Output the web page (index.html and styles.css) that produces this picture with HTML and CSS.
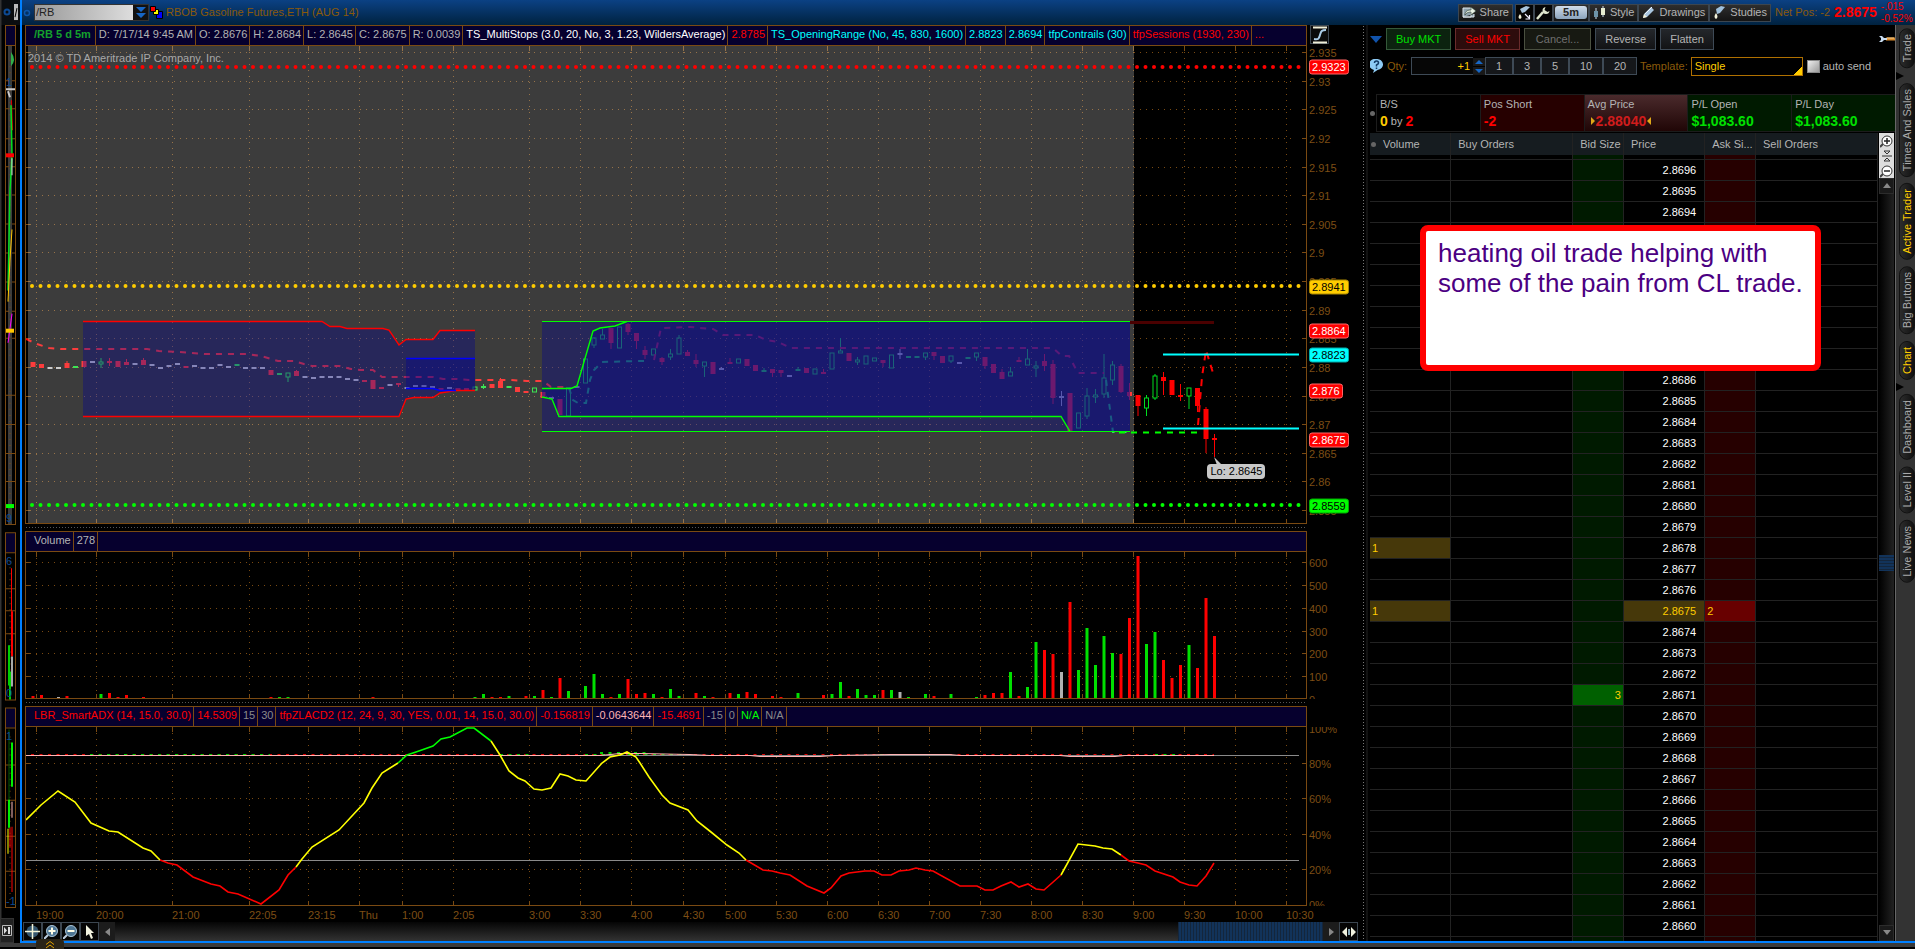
FILE: index.html
```html
<!DOCTYPE html>
<html lang="en">
<head>
    <meta charset="UTF-8">
    <meta name="viewport" content="width=device-width, initial-scale=1.0">
    <title>RBOB Gasoline Futures,ETH (AUG 14)</title>
    <link rel="stylesheet" href="styles.css">
</head>
<body>
    <div class="app">
        <aside class="behind">
            <svg class="behind-chart" viewBox="0 0 20 941" preserveAspectRatio="none" aria-hidden="true">
                <rect x="0" y="0" width="20" height="25" fill="#0a0d10"/>
                <path d="M0.5 0V941" stroke="#333" stroke-width="2"/>
                <circle cx="7" cy="12" r="2.5" fill="none" stroke="#0d4a94" stroke-width="2"/>
                <path d="M14 4h4v16h-4z" fill="#bbb"/>
                <path d="M15 17l2-9" stroke="#000"/>
                <path d="M5 26h11v19H5zM5 532h11v19H5zM5 707h11v19H5z" fill="#06002e"/>
                <path d="M8 46h4v477H8z" fill="#3c3c3c"/>
                <path d="M11 52q6 8 0 14z" fill="#2fae4a"/>
                <path d="M10 60v450M10 560v135M10 735v165" stroke="#7a4a12" stroke-dasharray="1 5"/>
                <path d="M5.500 25V523M15.500 25V523M5 25.500h11M5 45.500h11M5 523.500h11M5.500 531v167M15.500 531v167M5 531.500h11M5 551.500h11M5 698.500h11M5.500 706v199M15.500 706v199M5 706.500h11M5 726.500h11M5 905.500h11" stroke="#7a4a12"/>
                <path d="M5 80.500h4M12 80.500h4M5 108.500h4M12 108.500h4M5 138.500h4M12 138.500h4M5 166.500h4M12 166.500h4M5 194.500h4M12 194.500h4M5 223.500h4M12 223.500h4M5 252.500h4M12 252.500h4M5 281.500h4M12 281.500h4M5 310.500h4M12 310.500h4M5 337.500h4M12 337.500h4M5 394.500h10M5 423.500h10M5 452.500h10M5 480.500h10M5 587.500h10M5 609.500h10M5 632.500h10M5 763.500h10M5 798.500h10M5 834.500h10M5 869.500h10" stroke="#7a4a12"/>
                <path d="M6 89h9M8 91l2 6" stroke="#ccc" stroke-width="2"/>
                <path d="M11.500 100l1 30" stroke="#e00000" stroke-width="1"/>
                <path d="M11 105l1 50-2 35-2 100" stroke="#00e020" stroke-width="1.500" fill="none"/>
                <path d="M12 158v17" stroke="#ddd"/>
                <path d="M12 229l-2 30-2 42" stroke="#ffc800" fill="none"/>
                <path d="M12 313l-2 15-2 14" stroke="#f0f" fill="none"/>
                <path d="M6 153h8v4H6z" fill="#f00"/>
                <path d="M6 328h8v4H6z" fill="#ffc800"/>
                <path d="M6 503h8v4H6z" fill="#0f0"/>
                <path d="M11.500 567v43" stroke="#f00"/>
                <path d="M12 610v45" stroke="#f00" stroke-width="2"/>
                <path d="M9 644v40M10 670v28" stroke="#00d000" stroke-width="2"/>
                <path d="M12 655v30" stroke="#aaa" stroke-width="2"/>
                <path d="M9 728v100" stroke="#005a00"/>
                <path d="M12 741v44M9 798v28" stroke="#00f000" stroke-width="2"/>
                <path d="M12 800v16" stroke="#fbb"/>
                <path d="M12 825v65M10 826v20" stroke="#f00"/>
                <path d="M8 827v25" stroke="#ff0"/>
                <g font-family="Liberation Sans, sans-serif" font-size="11" fill="#0b4a94">
                    <text x="6" y="86">1</text><text x="6" y="521">9</text><text x="6" y="564">6</text>
                    <text x="6" y="696">0</text><text x="6" y="738">1</text><text x="6" y="903">-1</text>
                </g>
            </svg>
            <button class="dock-button" aria-label="Show panel">
                <svg width="10" height="11" viewBox="0 0 10 11"><path d="M0.500 .5h9v10h-9z" fill="none" stroke="#bbb"/><path d="M2 2l3 3.500L2 9zM6 2h2v7H6z" fill="#ddd"/></svg>
            </button>
        </aside>

        <main class="window">
            <header class="titlebar">
                <svg class="link-dot" width="8" height="8" viewBox="0 0 8 8"><circle cx="4" cy="4" r="2.500" fill="none" stroke="#0d57ac" stroke-width="1.500"/></svg>
                <div class="symbol-box">
                    <input type="text" class="symbol" value="/RB" aria-label="Symbol">
                    <button class="symbol-drop" aria-label="Recent symbols">
                        <svg width="10" height="12" viewBox="0 0 10 12"><path d="M0 0h10L5 5zM0 6h10l-5 5z" fill="#1766c4"/></svg>
                    </button>
                </div>
                <svg class="squares" width="14" height="13" viewBox="0 0 14 13"><path d="M6.500 5.500h6v7h-6z" fill="#00f" stroke="#000"/><path d="M3.500 3.500h5v5h-5z" fill="#ff0" stroke="#000"/><path d="M.5 .5h5v5h-5z" fill="#f00" stroke="#000"/></svg>
                <h1>RBOB Gasoline Futures,ETH (AUG 14)</h1>
                <div class="tools">
                    <button class="tool share"><svg width="14" height="13" viewBox="0 0 14 13"><path d="M1 2h8v9H1zM1 11h11V8" fill="#8fa2ad" stroke="#dfe8ee"/><path d="M3 9c0-4 3-5 6-5V1l5 4-5 4V6C6 6 4 7 3 9z" fill="#e9f3e6" stroke="#25362c" stroke-width=".6"/></svg>Share</button>
                    <button class="tool icon" aria-label="Chart drawing"><svg width="14" height="14" viewBox="0 0 14 14"><path d="M3 3l6-3 4 1-5 5-3 1z" fill="#a7c4dd"/><path d="M3 8q3 4 0 5-3-1 0-5z" fill="#f2f2da"/><path d="M8 8l4 4M12.500 9v4H8.500" stroke="#eef" stroke-width="1.200" fill="none"/></svg></button>
                    <button class="tool icon" aria-label="Settings"><svg width="14" height="14" viewBox="0 0 14 14"><path d="M1 13l6-7" stroke="#dfe6ce" stroke-width="2.500"/><path d="M9.500 1a3.500 3.500 0 1 0 4 4l-2 1-3-2z" fill="#dfe6ce"/></svg></button>
                    <button class="tool interval"><b>5m</b></button>
                    <button class="tool"><svg width="13" height="13" viewBox="0 0 13 13"><path d="M3 2v11M10 0v11" stroke="#cde"/><path d="M1 5h4v6H1z" fill="#6d93a8"/><path d="M8 2h4v7H8z" fill="#e6ecd0"/></svg>Style</button>
                    <button class="tool"><svg width="13" height="13" viewBox="0 0 13 13"><path d="M1 12l1-4 7-7 3 3-7 7z" fill="#a9c6e0"/><path d="M1 12l1-4 3 3z" fill="#f4efd4"/><path d="M3 8l7-7" stroke="#eef6ff"/></svg>Drawings</button>
                    <button class="tool"><svg width="13" height="13" viewBox="0 0 13 13"><path d="M3 3l5-3 4 1-5 6-3 1z" fill="#9fc0dc"/><path d="M3 7q3 4 0 6-3-2 0-6z" fill="#f2f2da"/></svg>Studies</button>
                </div>
                <div class="position">
                    <span>Net Pos: -2</span>
                    <b>2.8675</b>
                    <span class="change">-.015<br>-0.52%</span>
                </div>
            </header>

            <div class="workspace">
                <section class="charts">
                    <div class="pane pane-price">
                        <div class="pane-main">
                            <div class="studies">
                                <span class="symbol-cell">/RB 5 d 5m</span>
                                <span>D: 7/17/14 9:45 AM</span>
                                <span>O: 2.8676</span>
                                <span>H: 2.8684</span>
                                <span>L: 2.8645</span>
                                <span>C: 2.8675</span>
                                <span>R: 0.0039</span>
                                <span class="white">TS_MultiStops (3.0, 20, No, 3, 1.23, WildersAverage)</span>
                                <span class="red">2.8785</span>
                                <span class="cyan">TS_OpeningRange (No, 45, 830, 1600)</span>
                                <span class="cyan">2.8823</span>
                                <span class="cyan">2.8694</span>
                                <span class="cyan">tfpContrails (30)</span>
                                <span class="red">tfpSessions (1930, 230)</span>
                                <span class="red last">...</span>
                            </div>
                            <div class="plot">
                                <svg id="pricePlot" viewBox="26 46 1280 477" preserveAspectRatio="none"></svg>
                                <p class="copyright">2014 © TD Ameritrade IP Company, Inc.</p>
                                <span class="low-tip">Lo: 2.8645</span>
                            </div>
                        </div>
                        <div class="axis-col">
                            <button class="axis-button" aria-label="Chart style">
                                <svg width="16" height="18" viewBox="0 0 16 18"><path d="M1 1.500h14M1 16.500h14" stroke="#efeed8" stroke-width="2"/><path d="M2 13c5 1 5-1 6-4s1-5 6-5" fill="none" stroke="#a9cbe6" stroke-width="2"/></svg>
                            </button>
                            <div class="axis" id="priceAxis"></div>
                        </div>
                    </div>
                    <div class="grip"></div>
                    <div class="pane pane-volume">
                        <div class="pane-main">
                            <div class="studies">
                                <span class="lead">Volume</span>
                                <span>278</span>
                            </div>
                            <div class="plot">
                                <svg id="volumePlot" viewBox="26 552 1280 146" preserveAspectRatio="none"></svg>
                            </div>
                        </div>
                        <div class="axis-col">
                            <div class="axis-head"></div>
                            <div class="axis" id="volumeAxis"></div>
                        </div>
                    </div>
                    <div class="grip"></div>
                    <div class="pane pane-adx">
                        <div class="pane-main">
                            <div class="studies">
                                <span class="lead red">LBR_SmartADX (14, 15.0, 30.0)</span>
                                <span class="red">14.5309</span>
                                <span class="gray">15</span>
                                <span class="gray">30</span>
                                <span class="red">tfpZLACD2 (12, 24, 9, 30, YES, 0.01, 14, 15.0, 30.0)</span>
                                <span class="red">-0.156819</span>
                                <span class="pink">-0.0643644</span>
                                <span class="red">-15.4691</span>
                                <span class="gray">-15</span>
                                <span class="gray">0</span>
                                <span class="green">N/A</span>
                                <span class="gray">N/A</span>
                            </div>
                            <div class="plot">
                                <svg id="adxPlot" viewBox="26 727 1280 178" preserveAspectRatio="none"></svg>
                            </div>
                        </div>
                        <div class="axis-col">
                            <div class="axis-head"></div>
                            <div class="axis" id="adxAxis"></div>
                        </div>
                    </div>
                    <div class="time-axis"><div id="timeAxis"></div></div>
                    <div class="chart-tools">
                        <button class="tool icon" aria-label="Crosshair"><svg width="15" height="15" viewBox="0 0 15 15"><circle cx="7.500" cy="7.500" r="6" fill="#35566e"/><path d="M7.500 0v15M0 7.500h15" stroke="#f2f3d8" stroke-width="1.500"/></svg></button>
                        <button class="tool icon" aria-label="Zoom in"><svg width="15" height="15" viewBox="0 0 15 15"><path d="M4 11l-4 4" stroke="#bcd" stroke-width="2"/><circle cx="8" cy="7" r="5.500" fill="#4d7593" stroke="#a9c4d8"/><path d="M8 3.500v7M4.500 7h7" stroke="#fffde6" stroke-width="2"/></svg></button>
                        <button class="tool icon" aria-label="Zoom out"><svg width="15" height="15" viewBox="0 0 15 15"><path d="M4 11l-4 4" stroke="#bcd" stroke-width="2"/><circle cx="8" cy="7" r="5.500" fill="#4d7593" stroke="#a9c4d8"/><path d="M4.500 7h7" stroke="#fffde6" stroke-width="2"/></svg></button>
                        <button class="tool icon" aria-label="Pointer"><svg width="12" height="14" viewBox="0 0 12 14"><path d="M2 0l8 8H7l2 5-2 1-2-5-3 2z" fill="#f2f3e0"/></svg></button>
                        <button class="step" aria-label="Scroll left"><svg width="5" height="8" viewBox="0 0 5 8"><path d="M5 0v8L0 4z" fill="#888"/></svg></button>
                        <div class="h-track"><div class="h-thumb"></div></div>
                        <button class="step" aria-label="Scroll right"><svg width="5" height="8" viewBox="0 0 5 8"><path d="M0 0v8l5-4z" fill="#888"/></svg></button>
                        <button class="tool icon fit" aria-label="Fit width"><svg width="14" height="10" viewBox="0 0 14 10"><path d="M5 0v10L0 5zM9 0v10l5-5z" fill="#f2f3e0"/><path d="M7 2v6" stroke="#8ab" stroke-width="2"/></svg></button>
                    </div>
                </section>

                <div class="splitter"></div>

                <section class="trader">
                    <div class="orders-row">
                        <svg class="fold" width="12" height="7" viewBox="0 0 12 7"><path d="M0 0h12L6 7z" fill="#1153ab"/></svg>
                        <button class="order buy">Buy MKT</button>
                        <button class="order sell">Sell MKT</button>
                        <button class="order cancel">Cancel...</button>
                        <button class="order">Reverse</button>
                        <button class="order">Flatten</button>
                        <svg class="wrench" width="16" height="8" viewBox="0 0 16 8"><path d="M7 4h9" stroke="#d98a2c" stroke-width="3"/><path d="M8 3h7" stroke="#f8d08a"/><path d="M0 1h3l2 2h3v2H5L3 7H0l2-2V3z" fill="#c7dbef"/></svg>
                    </div>
                    <div class="qty-row">
                        <svg width="13" height="14" viewBox="0 0 13 14"><path d="M6.500 0a6 5.500 0 0 1 1 11L3 14l1-3A6 5.500 0 0 1 6.500 0z" fill="#8ecbf5"/><path d="M4.500 4q0-2 2-2t2 2q0 1-2 2v1.500M6.500 8.500v1.500" fill="none" stroke="#123a66" stroke-width="1.500"/></svg>
                        <label class="qty-label" for="qty">Qty:</label>
                        <input type="text" id="qty" value="+1">
                        <div class="spin">
                            <button aria-label="Increase"><svg width="8" height="4" viewBox="0 0 8 4"><path d="M0 4h8L4 0z" fill="#1766c4"/></svg></button>
                            <button aria-label="Decrease"><svg width="8" height="4" viewBox="0 0 8 4"><path d="M0 0h8L4 4z" fill="#1766c4"/></svg></button>
                        </div>
                        <button class="preset">1</button>
                        <button class="preset">3</button>
                        <button class="preset">5</button>
                        <button class="preset wide">10</button>
                        <button class="preset wide">20</button>
                        <label class="template-label" for="template">Template:</label>
                        <select id="template"><option>Single</option></select>
                        <input type="checkbox" id="autoSend">
                        <label for="autoSend">auto send</label>
                    </div>
                    <div class="summary">
                        <i class="dot"></i>
                        <div class="stat"><span>B/S</span><p><b class="yellow">0</b> by <b class="red">2</b></p></div>
                        <div class="stat short"><span>Pos Short</span><p><b class="red">-2</b></p></div>
                        <div class="stat avg"><span>Avg Price</span><p><svg width="4" height="8" viewBox="0 0 4 8"><path d="M0 0v8l4-4z" fill="#e0a818"/></svg><b>2.88040</b><svg width="4" height="8" viewBox="0 0 4 8"><path d="M4 0v8L0 4z" fill="#e0a818"/></svg></p></div>
                        <div class="stat gain"><span>P/L Open</span><p><b>$1,083.60</b></p></div>
                        <div class="stat gain"><span>P/L Day</span><p><b>$1,083.60</b></p></div>
                    </div>
                    <div class="ladder">
                        <div class="ladder-view">
                            <table>
                                <colgroup>
                                    <col class="narrow"><col class="wide"><col class="size"><col class="narrow"><col class="size"><col class="wide">
                                </colgroup>
                                <thead>
                                    <tr><th class="first"><i class="dot"></i>Volume</th><th>Buy Orders</th><th>Bid Size</th><th>Price</th><th>Ask Si...</th><th>Sell Orders</th></tr>
                                </thead>
                                <tbody id="ladder"></tbody>
                            </table>
                        </div>
                        <div class="v-scroll">
                            <button class="zoom" aria-label="Larger rows"><svg width="14" height="14" viewBox="0 0 14 14"><path d="M3 10l-3 3" stroke="#444" stroke-width="2"/><circle cx="7" cy="7" r="5" fill="#fff" stroke="#333"/><path d="M7 4v6M4 7h6" stroke="#222" stroke-width="1.500"/></svg></button>
                            <button class="zoom" aria-label="Center price"><svg width="10" height="12" viewBox="0 0 10 12"><path d="M2 1h6L5 4zM2 11h6L5 8zM0 6h10" fill="none" stroke="#333"/></svg></button>
                            <button class="zoom" aria-label="Smaller rows"><svg width="14" height="14" viewBox="0 0 14 14"><path d="M3 10l-3 3" stroke="#444" stroke-width="2"/><circle cx="7" cy="7" r="5" fill="#fff" stroke="#333"/><path d="M4 7h6" stroke="#222" stroke-width="1.500"/></svg></button>
                            <button class="v-step" aria-label="Scroll up"><svg width="8" height="6" viewBox="0 0 8 6"><path d="M0 5h8L4 0z" fill="#888"/></svg></button>
                            <div class="v-track"><div class="v-thumb"></div></div>
                            <button class="v-step" aria-label="Scroll down"><svg width="8" height="6" viewBox="0 0 8 6"><path d="M0 0h8L4 5z" fill="#888"/></svg></button>
                        </div>
                    </div>
                    <div class="note">heating oil trade helping with some of the pain from CL trade.</div>
                </section>

                <nav class="gadgets">
                    <a href="#">Trade</a>
                    <svg width="8" height="8" viewBox="0 0 8 8"><path d="M0 0l8 4-8 4z" fill="#000"/></svg>
                    <a href="#">Times And Sales</a>
                    <a href="#" class="active">Active Trader</a>
                    <a href="#">Big Buttons</a>
                    <a href="#" class="active">Chart</a>
                    <svg width="8" height="8" viewBox="0 0 8 8"><path d="M0 0l8 4-8 4z" fill="#000"/></svg>
                    <a href="#">Dashboard</a>
                    <a href="#">Level II</a>
                    <a href="#">Live News</a>
                </nav>
            </div>
        </main>
    </div>
    <footer class="bottom-edge">
        <button class="drawer" aria-label="Open drawer"><svg width="10" height="9" viewBox="0 0 10 9"><path d="M1 4.500l4-3 4 3M1 8l4-3 4 3" fill="none" stroke="#e0a000"/></svg></button>
    </footer>
    <script src="script.js"></script>
</body>
</html>
```

FILE: styles.css
```css
* {
    box-sizing: border-box;
}
body {
    margin: 0;
    height: 100vh;
    display: flex;
    flex-direction: column;
    background: #000;
    color: #b4b4b4;
    font-family: "Liberation Sans", Arial, sans-serif;
    font-size: 11px;
    line-height: 13px;
    overflow: hidden;
}
button, input, select {
    font: inherit;
    color: inherit;
    margin: 0;
    padding: 0;
    border: 0;
    border-radius: 0;
    background: none;
}
svg {
    display: block;
    flex: none;
}
p, h1 {
    margin: 0;
}
.red { color: #f00; }
.white { color: #fff; }
.cyan { color: #0ff; }
.gray { color: #8a8a8a; }
.green { color: #0f0; }
.pink { color: #ffb4b4; }
.yellow { color: #fc0; }

.app {
    flex: 1;
    min-height: 0;
    display: flex;
}
.behind {
    width: 20px;
    position: relative;
    overflow: hidden;
}
.behind-chart {
    width: 20px;
    height: 100%;
}
.dock-button {
    position: absolute;
    left: 0;
    bottom: 0;
    width: 14px;
    height: 25px;
    display: grid;
    place-items: center;
    background: #222;
    border: 1px solid #333;
}
.window {
    flex: 1;
    min-width: 0;
    display: flex;
    flex-direction: column;
    border-left: 2px solid #0080ff;
    border-bottom: 2px solid #0080ff;
}

/* Title bar */
.titlebar {
    height: 25px;
    display: flex;
    align-items: center;
    background: linear-gradient(#0b4184, #00223f);
}
.link-dot {
    margin: 0 3px 0 1px;
}
.symbol-box {
    display: flex;
    width: 115px;
    height: 17px;
    border: 1px solid #333;
}
.symbol {
    flex: 1;
    width: 0;
    padding-left: 1px;
    color: #222;
    background: linear-gradient(90deg, #999, #ddd);
}
.symbol-drop {
    width: 15px;
    display: grid;
    place-items: center;
    background: #111;
}
.squares {
    margin: 0 2px 0 1px;
}
h1 {
    flex: 1;
    font-size: 11px;
    font-weight: normal;
    color: #8a5a0a;
    white-space: nowrap;
}
.tools {
    display: flex;
}
.tool {
    height: 18px;
    padding: 0 3px;
    display: flex;
    align-items: center;
    gap: 4px;
    border: 1px solid #3c4650;
    background: linear-gradient(#2e2e2e, #141414);
}
.tool.icon {
    width: 19px;
    padding: 0;
    justify-content: center;
    background: #050505;
}
.tool.share {
    margin-right: 2px;
}
.tool.interval {
    width: 36px;
    padding: 0;
}
.interval b {
    flex: 1;
    margin: 0 1px;
    border-radius: 3px;
    color: #222;
    background: linear-gradient(#cfdcea, #8ba4bd);
}
.position {
    display: flex;
    align-items: center;
    gap: 4px;
    width: 144px;
    padding-left: 4px;
    color: #8a5a0a;
    white-space: nowrap;
}
.position b {
    font-size: 14px;
    color: #f00;
}
.position .change {
    font-size: 10px;
    line-height: 12px;
    color: #f00;
}

.workspace {
    flex: 1;
    min-height: 0;
    display: grid;
    grid-template-columns: minmax(0, 1fr) 6px 527px 20px;
    grid-template-rows: minmax(0, 1fr);
}

/* Charts */
.charts {
    display: flex;
    flex-direction: column;
    padding-left: 3px;
    min-height: 0;
}
.pane {
    display: flex;
    min-height: 0;
}
.pane-price { flex: 499 1 0; }
.pane-volume { flex: 168 1 0; }
.pane-adx { flex: 200 1 0; }
.pane-main {
    flex: 1;
    min-width: 0;
    display: flex;
    flex-direction: column;
    border: 1px solid #7a4a12;
}
.studies {
    height: 20px;
    display: flex;
    overflow: hidden;
    white-space: nowrap;
    background: #06002e;
    border-bottom: 1px solid #7a4a12;
}
.studies span {
    flex: none;
    padding: 2px 2px 2px 3px;
    border-right: 1px solid #7a4a12;
}
.studies .lead {
    padding-left: 8px;
}
.studies .symbol-cell {
    padding-left: 8px;
    padding-right: 4px;
    font-weight: bold;
    color: #14a02c;
}
.studies .last {
    border: 0;
}
.plot {
    flex: 1;
    min-height: 0;
    position: relative;
}
.plot svg {
    width: 100%;
    height: 100%;
}
.copyright {
    position: absolute;
    left: 2px;
    top: 6px;
    color: #a8a8a8;
}
.low-tip {
    position: absolute;
    left: 92.3%;
    top: 87.6%;
    padding: 1px 3px;
    border-radius: 4px;
    background: #c8c8c8;
    color: #000;
}
.axis-col {
    width: 55px;
    display: flex;
    flex-direction: column;
}
.axis-head {
    height: 21px;
}
.axis-button {
    width: 19px;
    height: 19px;
    margin: 0 0 2px 3px;
    display: grid;
    place-items: center;
    background: #0a0a0a;
    border: 1px solid #3c4650;
}
.axis {
    flex: 1;
    position: relative;
    overflow: hidden;
    color: #7d4e14;
}
.axis span {
    position: absolute;
    left: 2px;
    transform: translateY(-50%);
}
.axis .tag {
    padding: 0 2px;
    border: 1px solid;
    border-radius: 3px;
}
.axis .tag-red { background: #f00; color: #fff; border-color: #f66; }
.axis .tag-yellow { background: #fc0; color: #000; border-color: #a80; }
.axis .tag-cyan { background: #0ff; color: #000; border-color: #0aa; }
.axis .tag-green { background: #0f0; color: #000; border-color: #0a0; }
.grip {
    height: 7px;
    margin-right: 55px;
    background: radial-gradient(circle, #555 0 1px, transparent 1px) 0 2px / 3px 3px repeat-x;
}
.time-axis {
    height: 16px;
    padding-right: 55px;
    color: #7d4e14;
}
.time-axis div {
    position: relative;
    height: 16px;
}
.time-axis span {
    position: absolute;
    top: 3px;
    white-space: nowrap;
}
.chart-tools {
    height: 19px;
    margin-left: -2px;
    display: flex;
}
.chart-tools .tool {
    height: 19px;
}
.chart-tools .fit {
    margin-right: 4px;
}
.step {
    width: 16px;
    display: grid;
    place-items: center;
    background: #1c1c1c;
}
.h-track {
    flex: 1;
    display: flex;
    justify-content: flex-end;
    background: linear-gradient(#050505, #333);
}
.h-thumb {
    width: 12%;
    background: repeating-linear-gradient(90deg, #14263c 0 1px, #12335a 1px 3px);
}
.splitter {
    border-right: 2px solid #111;
    background: radial-gradient(circle, #777 0 1px, transparent 1px) 0 0 / 3px 3px repeat-y;
}

/* Active trader */
.trader {
    position: relative;
    padding-left: 2px;
    display: flex;
    flex-direction: column;
    min-height: 0;
}
.orders-row {
    height: 22px;
    margin: 3px 0 6px;
    display: flex;
    align-items: center;
    gap: 4px;
}
.order {
    height: 22px;
    padding: 0 9px;
    border: 1px solid #3e4a56;
    background: linear-gradient(#24272b, #121315);
    white-space: nowrap;
}
.buy { color: #00e000; border-color: #35593a; background: #0c230f; }
.sell { color: #f00; border-color: #6a2c2c; background: #2d0c0c; }
.cancel { color: #707070; padding: 0 11px; border-color: #4a5040; background: #171912; }
.wrench {
    margin-left: auto;
}
.qty-row {
    height: 20px;
    display: flex;
    align-items: center;
    white-space: nowrap;
}
.qty-label {
    width: 28px;
    padding-left: 4px;
}
.qty-label, .template-label {
    color: #8a5a0a;
}
#qty {
    width: 62px;
    height: 18px;
    padding-right: 3px;
    text-align: right;
    color: #fc0;
    border: 1px solid #3e4a56;
    border-right: 0;
    background: #060606;
}
.spin {
    width: 12px;
    display: flex;
    flex-direction: column;
    gap: 1px;
}
.spin button {
    height: 8px;
    display: grid;
    place-items: center;
    background: #181818;
}
.preset {
    width: 28px;
    height: 18px;
    border: 1px solid #3e4a56;
    background: #15171a;
}
.preset.wide {
    width: 34px;
}
.template-label {
    padding: 0 3px;
}
#template {
    width: 112px;
    height: 19px;
    padding-left: 3px;
    margin-right: 4px;
    appearance: none;
    color: #fc0;
    border: 1px solid #b07000;
    background: linear-gradient(135deg, transparent 50%, #fc0 50%) right bottom / 8px 8px no-repeat #000;
}
#autoSend {
    appearance: none;
    width: 13px;
    height: 13px;
    margin-right: 3px;
    border: 1px solid #888;
    background: linear-gradient(135deg, #eee, #999);
}
.dot {
    display: inline-block;
    width: 5px;
    height: 5px;
    border-radius: 50%;
    background: #666;
}
.summary {
    height: 38px;
    margin: 18px 0 1px;
    display: flex;
    align-items: center;
}
.summary .dot {
    margin-right: 1px;
}
.stat {
    flex: 1;
    height: 38px;
    padding: 3px;
    border: 1px solid #1c1c1c;
    border-right: 0;
}
.stat p {
    display: flex;
    align-items: center;
    gap: 3px;
    line-height: 16px;
    padding-top: 2px;
}
.stat b {
    font-size: 14px;
}
.short { background: #260000; }
.avg { background: linear-gradient(#4a2a2c, #200606); }
.avg b { color: #d01c1c; }
.avg p { padding-left: 3px; gap: 1px; }
.gain { background: #001a00; }
.gain b { color: #00e000; }
.ladder {
    flex: 1;
    min-height: 0;
    display: flex;
}
.ladder-view {
    flex: 1;
    overflow: hidden;
}
table {
    width: 100%;
    table-layout: fixed;
    border-collapse: separate;
    border-spacing: 0;
}
.narrow { width: 16%; }
.wide { width: 24%; }
.size { width: 10%; }
th {
    height: 22px;
    padding: 0 0 0 7px;
    text-align: left;
    font-weight: normal;
    white-space: nowrap;
    background: #161c20;
    border-right: 1px solid #222;
}
th.first {
    padding-left: 1px;
}
th .dot {
    margin-right: 7px;
    vertical-align: 1px;
}
td {
    height: 21px;
    padding: 0 2px;
    border-right: 1px solid #222;
    border-bottom: 1px solid #222;
}
.stub td {
    height: 5px;
}
td:nth-child(3) { background: #001a00; text-align: right; }
td:nth-child(4) { color: #fff; text-align: right; padding-right: 8px; }
td:nth-child(5) { background: #260000; }
tbody td.traded { background: #46380a; color: #fc0; }
tbody td.bid { background: #006000; color: #fc0; }
tbody td.ask { background: #680000; color: #fc0; }
.v-scroll {
    width: 17px;
    padding: 0 1px;
    display: flex;
    flex-direction: column;
}
.zoom, .v-step {
    height: 15px;
    display: grid;
    place-items: center;
    background: #ddd;
}
.v-step {
    height: 16px;
    background: #1a1a1a;
    border: 1px solid #2c2c2c;
}
.v-track {
    flex: 1;
    background: linear-gradient(90deg, #000, #222);
    padding-top: 361px;
}
.v-thumb {
    height: 16px;
    background: repeating-linear-gradient(#12335a 0 2px, #14263c 2px 3px);
}
.note {
    position: absolute;
    left: 52px;
    top: 200px;
    width: 401px;
    height: 146px;
    padding: 7px 12px;
    border: 6px solid #f00;
    border-radius: 8px;
    background: #fff;
    color: #4b0082;
    font-size: 26px;
    line-height: 30px;
}

/* Gadget tabs */
.gadgets {
    padding-top: 3px;
    display: flex;
    flex-direction: column;
    align-items: flex-end;
    gap: 6px;
    background: #333;
    border-left: 1px solid #666;
}
.gadgets a {
    width: 16px;
    padding: 5px 0;
    writing-mode: vertical-rl;
    transform: rotate(180deg);
    line-height: 14px;
    color: #aaa;
    text-decoration: none;
    border: 1px solid #111;
    border-radius: 8px;
    background: linear-gradient(90deg, #111, #2c2c2c);
}
.gadgets .active {
    color: #fc0;
}
.gadgets svg {
    align-self: flex-start;
    margin: -2px 0 -3px;
}
.bottom-edge {
    height: 6px;
    padding-left: 36px;
    background: linear-gradient(#3a3a3a 4px, #000 4px);
}
.drawer {
    position: relative;
    top: -4px;
    width: 28px;
    height: 10px;
    display: grid;
    place-items: center;
    border-radius: 4px 4px 0 0;
    background: #2a2418;
}
```

FILE: script.js
```js
const NS = 'http://www.w3.org/2000/svg';
const BROWN = '#7a4a12';

function barX(i) {
    return 33 + 8.5 * i;
}

function add(svg, tag, attrs) {
    const el = document.createElementNS(NS, tag);
    for (const key in attrs) el.setAttribute(key, attrs[key]);
    svg.appendChild(el);
}

function line(svg, d, stroke, width, dash) {
    const attrs = { d: d, stroke: stroke, 'stroke-width': width || 1, fill: 'none' };
    if (dash) attrs['stroke-dasharray'] = dash;
    add(svg, 'path', attrs);
}

const times = [
    [36, '19:00'], [96, '20:00'], [172, '21:00'], [249, '22:05'], [308, '23:15'], [359, 'Thu'],
    [402, '1:00'], [453, '2:05'], [529, '3:00'], [580, '3:30'], [631, '4:00'], [683, '4:30'],
    [725, '5:00'], [776, '5:30'], [827, '6:00'], [878, '6:30'], [929, '7:00'], [980, '7:30'],
    [1031, '8:00'], [1082, '8:30'], [1133, '9:00'], [1184, '9:30'], [1235, '10:00'], [1286, '10:30']
];

// dotted grid with short ticks on all four sides
function grid(svg, top, bottom, rows) {
    times.forEach(([x]) => {
        const px = x + 0.5;
        line(svg, `M${px} ${top + 6}V${bottom - 6}`, BROWN, 1, '1 5');
        line(svg, `M${px} ${top}v5M${px} ${bottom}v-4`, BROWN);
    });
    rows.forEach(y => {
        line(svg, `M36 ${y}H1292`, BROWN, 1, '1 5');
        line(svg, `M26 ${y}h5M1306 ${y}h-4`, BROWN);
    });
}

function axisLabel(axis, top, height, y, text, cls) {
    const el = document.createElement('span');
    el.textContent = text;
    if (cls) el.className = 'tag ' + cls;
    el.style.top = ((y - top) / height * 100) + '%';
    axis.appendChild(el);
}

// bar index, high, body top, body bottom, low, type
// r = down, g = up (hollow), G = small up, w = unchanged
const candles = [
    [0,362,362,367,367,'r'],[1,364,364,368,368,'r'],[2,368,367,369,368,'w'],[3,368,367,369,368,'w'],
    [4,361,363,368,368,'r'],[5,367,366,368,367,'G'],[6,361,361,367,367,'r'],[7,362,361,363,362,'w'],
    [8,358,362,364,368,'g'],[9,358,361,363,366,'r'],[10,361,361,367,367,'r'],[11,359,362,365,365,'r'],
    [12,364,363,365,364,'w'],[13,358,360,365,365,'r'],[14,365,364,366,365,'w'],[15,368,367,369,368,'w'],
    [16,366,365,367,366,'w'],[17,364,363,365,364,'w'],[18,367,366,368,367,'r'],[19,366,365,367,366,'w'],
    [20,368,367,369,368,'w'],[21,368,367,369,368,'w'],[22,365,364,366,365,'w'],[23,367,366,368,367,'w'],
    [24,365,364,366,365,'G'],[25,368,367,369,368,'w'],[26,368,367,369,368,'w'],[27,368,367,369,368,'w'],
    [28,370,370,375,375,'r'],[29,374,373,375,374,'G'],[30,373,373,377,382,'g'],[31,370,371,376,376,'r'],
    [32,377,376,378,377,'w'],[33,378,377,379,378,'w'],[34,377,376,378,377,'w'],[35,377,376,378,377,'w'],
    [36,377,376,378,377,'w'],[37,379,378,380,379,'w'],[38,380,379,381,380,'w'],[39,380,380,382,382,'r'],
    [40,380,380,389,389,'r'],[41,387,387,389,389,'r'],[42,385,384,386,385,'w'],[43,383,383,385,387,'r'],
    [44,388,387,389,388,'w'],[45,386,385,387,386,'w'],[46,386,385,387,386,'w'],[47,387,386,388,387,'w'],
    [48,388,388,390,390,'r'],[49,388,387,389,388,'w'],[50,388,388,390,390,'r'],[51,388,388,390,390,'r'],
    [52,387,387,390,390,'g'],[53,384,386,388,389,'G'],[54,384,384,388,388,'r'],[55,378,381,388,388,'r'],
    [56,386,386,388,388,'G'],[57,387,387,392,392,'r'],[58,391,391,393,393,'r'],[59,388,388,392,392,'g'],
    [60,392,392,398,398,'r'],[61,398,397,399,398,'w'],[62,399,399,415,415,'r'],[63,388,388,416,416,'g'],
    [64,387,386,388,387,'w'],[65,359,359,383,383,'g'],[66,337,338,345,348,'g'],[67,329,335,339,339,'g'],
    [68,328,328,343,349,'r'],[69,327,327,348,348,'g'],[70,323,324,332,335,'r'],[71,333,333,341,349,'r'],
    [72,346,350,355,359,'r'],[73,349,349,355,355,'g'],[74,357,358,362,365,'r'],[75,349,354,357,360,'g'],
    [76,335,338,354,354,'g'],[77,350,352,356,356,'r'],[78,354,360,364,367,'r'],[79,362,362,366,377,'g'],
    [80,362,362,374,374,'r'],[81,367,368,370,369,'w'],[82,358,362,364,364,'r'],[83,359,359,363,363,'g'],
    [84,359,359,366,366,'r'],[85,365,365,371,371,'r'],[86,368,370,372,372,'G'],[87,369,369,373,377,'r'],
    [88,370,370,373,377,'r'],[89,376,375,377,376,'w'],[90,367,369,371,371,'G'],[91,368,368,373,373,'r'],
    [92,369,369,374,374,'g'],[93,369,372,374,374,'r'],[94,353,353,369,369,'g'],[95,338,351,353,353,'g'],
    [96,353,353,361,361,'r'],[97,357,360,362,365,'g'],[98,356,356,364,364,'g'],[99,358,358,361,361,'g'],
    [100,360,360,363,367,'r'],[101,355,355,368,368,'g'],[102,349,353,355,359,'w'],[103,357,356,358,358,'G'],
    [104,357,356,358,358,'G'],[105,353,353,357,360,'g'],[106,352,352,356,360,'r'],[107,356,356,363,363,'r'],
    [108,356,356,361,363,'g'],[109,363,362,364,363,'w'],[110,357,357,359,359,'G'],[111,353,353,357,361,'g'],
    [112,357,357,366,369,'r'],[113,364,364,373,373,'r'],[114,369,372,379,379,'r'],[115,367,372,376,376,'g'],
    [116,357,360,362,362,'r'],[117,349,359,365,365,'g'],[118,361,366,368,377,'g'],[119,354,361,366,371,'r'],
    [120,360,364,398,404,'r'],[121,391,396,398,406,'w'],[122,393,393,431,431,'r'],[123,413,413,428,428,'g'],
    [124,388,396,416,419,'g'],[125,389,395,397,403,'g'],[126,354,378,394,398,'g'],[127,361,365,380,385,'g'],
    [128,364,366,392,393,'r'],[129,383,392,396,400,'r'],[130,395,395,406,416,'r'],[131,395,398,408,416,'g'],
    [132,374,376,398,400,'g'],[133,372,377,381,395,'r'],[134,380,380,395,395,'r'],[135,384,395,397,401,'r'],
    [136,388,388,396,409,'g'],[137,388,388,406,412,'r'],[138,407,409,439,453,'r'],[139,434,438,440,457,'r']
];

function drawPrice() {
    const svg = document.getElementById('pricePlot');
    const axis = document.getElementById('priceAxis');
    const rows = [];
    for (let n = 0; n < 17; n++) {
        const y = 52.5 + Math.round(n * 28.63);
        rows.push(y);
        axisLabel(axis, 46, 477, y, String(Number((2.935 - n * 0.005).toFixed(3))));
    }
    grid(svg, 46, 523, rows);

    const colors = { r: '#f00', g: '#00e020', G: '#00e020', w: '#c0c0c0' };
    candles.forEach(([i, hi, top, bottom, lo, type]) => {
        const x = barX(i);
        const c = colors[type];
        if (hi < top) line(svg, `M${x} ${hi}V${top}`, c);
        if (lo > bottom) line(svg, `M${x} ${bottom}V${lo}`, c);
        if (type === 'g') {
            add(svg, 'rect', { x: x - 2, y: top, width: 4, height: bottom - top, fill: 'none', stroke: c });
        } else {
            add(svg, 'rect', { x: x - 2.5, y: top, width: 5, height: bottom - top, fill: c });
        }
    });

    // trailing stop
    line(svg, 'M26 339L37 344 49 348 61 349H147L159 351 180 352 204 354H245L261 356 278 361H294L304 364 312 366H339L351 369 361 370H373L382 377H433L443 379H457L469 380H510L527 381H543L551 387H565', '#f00', 2, '6 6');
    line(svg, 'M569 388L573 400 578 403H586L590 380 594 370 602 362 637 361H644', '#00c840', 2, '6 6');
    line(svg, 'M654 360L661 328 690 327 713 329 723 335H755L766 340 778 342 791 348H1053L1062 356H1069L1078 373H1104', '#c00020', 2, '6 6');
    line(svg, 'M1106 380L1113 432H1128', '#00c840', 2, '6 6');

    // overnight shading, then the session boxes
    add(svg, 'path', { d: 'M28 46H1134V523H28z', fill: 'rgba(240,240,240,.25)' });
    const navy = 'rgba(0,0,150,.34)';
    add(svg, 'path', { d: 'M83 321H322L330 326H340L347 328H383L389 330 399 345 406 339H433L440 330H475V390H456L440 393 433 397H414L406 399 399 416H83z', fill: navy });
    add(svg, 'path', { d: 'M406 358H475V390H440L433 388H406z', fill: navy });
    add(svg, 'path', { d: 'M542 321H1130V431H542z', fill: navy });
    add(svg, 'path', { d: 'M542 388H571L577 386 593 331 600 328 615 326 627 321H1130V431H1070L1061 416H559L552 399 542 397z', fill: navy });
    line(svg, 'M83 321.5H322L330 326.5H340L347 328.500H383L389 330 399 345 406 339.500H433L440 330.500H475', '#f00', 1.4);
    line(svg, 'M83 416.5H399L406 399 414 397.500H433L440 393 456 390.500H475', '#f00', 1.4);
    line(svg, 'M406 358.5H475M406 388.500H433L440 390.500H456', '#00f', 1.4);
    line(svg, 'M542 321.5H1130M542 431.500H1130', '#0f0');
    line(svg, 'M542 388.5H571L577 386 593 331 600 328 615 326 627 321.500', '#0f0', 1.4);
    line(svg, 'M542 397L552 399 559 416.500H1061L1070 431.500', '#0f0', 1.4);

    line(svg, 'M1130 322.5H1214', '#4a0000', 3);
    line(svg, 'M1119 432.5H1198', '#0f0', 2, '6 6');
    line(svg, 'M1198 425L1202 377 1206 350 1213 373', '#f00', 2, '7 6');
    line(svg, 'M1163 354.5H1299M1163 428.500H1299', '#0ff', 2);
    add(svg, 'path', { d: 'M1214 457l3 8h5z', fill: '#c8c8c8' });

    [[67, '#f00'], [286, '#fc0'], [505, '#0f0']].forEach(([y, color]) => {
        add(svg, 'path', { d: `M32 ${y}H1299`, stroke: color, 'stroke-width': 4, 'stroke-linecap': 'round', 'stroke-dasharray': '0 8.5' });
    });

    [[67, '2.9323', 'red'], [286, '2.8941', 'yellow'], [330, '2.8864', 'red'], [354, '2.8823', 'cyan'],
     [390, '2.876', 'red'], [439, '2.8675', 'red'], [505, '2.8559', 'green']].forEach(([y, text, color]) => {
        axisLabel(axis, 46, 477, y, text, 'tag-' + color);
    });
}

const volumes = 'r0:2 r1:3 w3:1 r4:2 g8:4 r9:5 r10:1 r11:3 r13:1 r28:1 g29:1 g30:1 r40:1 g52:1 g53:4 r54:1 r55:1 g56:2 r58:2 g59:2 r60:8 g61:1 r62:20 g63:7 g65:12 g66:24 g67:4 r68:1 g69:4 r70:19 r71:4 r72:5 g73:4 r74:1 g75:9 g76:2 r78:5 g79:2 r80:1 r82:5 g83:4 r84:6 r85:4 r87:2 r88:1 g90:5 r93:3 g94:4 g95:16 r96:2 g97:9 g98:3 g99:3 r100:8 g101:8 w102:6 g103:1 g105:4 r106:2 g108:4 g111:1 r112:3 r113:5 r114:5 g115:26 r116:2 g117:11 g118:56 r119:48 r120:44 w121:26 r122:96 g123:28 g124:70 g125:33 g126:62 g127:45 r128:44 r129:80 r130:142 g131:54 g132:66 r133:38 r134:20 r135:33 g136:53 r137:30 r138:100 r139:62';

function drawVolume() {
    const svg = document.getElementById('volumePlot');
    const axis = document.getElementById('volumeAxis');
    const rows = [562.5, 585.5, 608.5, 631.5, 653.5, 676.5];
    grid(svg, 552, 698, rows);
    rows.forEach((y, n) => axisLabel(axis, 552, 146, y, 600 - n * 100));
    axisLabel(axis, 552, 146, 699, '0');
    const colors = { r: '#f00', g: '#00e000', w: '#b0b0b0' };
    volumes.split(' ').forEach(item => {
        const [bar, h] = item.slice(1).split(':').map(Number);
        add(svg, 'rect', { x: barX(bar) - 1.5, y: 698 - h, width: 3, height: h, fill: colors[item[0]] });
    });
}

function drawAdx() {
    const svg = document.getElementById('adxPlot');
    const axis = document.getElementById('adxAxis');
    const rows = [763.5, 798.5, 834.5, 869.5];
    grid(svg, 727, 905, rows);
    rows.forEach((y, n) => axisLabel(axis, 727, 178, y, (80 - n * 20) + '%'));
    axisLabel(axis, 727, 178, 729, '100%');
    axisLabel(axis, 727, 178, 904, '0%');

    line(svg, 'M26 755.5H1299M26 860.500H1299', '#8a8a8a');
    line(svg, 'M31 754.5H1214', '#e00000', 1, '3 5.5');
    line(svg, 'M90 754.5H270M500 754.500H530M585 754.500H690M880 754.500H950M1155 754.500H1180', '#00d000', 1, '3 5.5');
    line(svg, 'M600 753H650', '#00d000', 2, '3 5.5');
    line(svg, 'M26 755.5H600L620 753.500H640L690 754.500 710 755.500H750L760 756.500H820L835 755.500 890 754.500H950L960 755.500H1060L1070 756.500H1115L1125 755.500H1214', '#ffb4b4', 1);

    const yellow = '#ff0', red = '#f00', green = '#0f0';
    [
        [yellow, '26,820 41,805 58,791 75,802 91,823 109,831 118,832 143,848 151,851 160,860'],
        [red, '160,860 168,863 177,865 193,877 211,884 220,886 228,892 238,894 261,904 279,890 288,875 296,867'],
        [yellow, '296,867 302,859 312,847 339,830 364,803 372,788 382,773 398,763'],
        [green, '398,763 407,755 416,752 433,746 441,739 450,737 467,728 474,728 491,741'],
        [yellow, '491,741 500,755 509,771 518,778 525,781 534,789 542,790 551,788 560,774 568,776 576,780 586,781 602,763 610,757 620,755 627,752 636,757 640,763 649,777 662,795 670,803 688,810 697,821 711,832 727,845 739,853 746,860'],
        [red, '746,860 763,870 772,871 780,873 790,875 807,886 824,893 831,888 841,876 849,873 865,871 874,871 882,875 891,875 899,871 909,870 916,868 925,870 933,871 960,886 977,886 985,890 993,890 1001,886 1011,882 1019,887 1028,884 1036,889 1044,890 1052,883 1061,875'],
        [yellow, '1061,875 1078,844 1095,846 1103,848 1112,849 1121,855'],
        [red, '1121,855 1129,861 1138,863 1146,865 1155,871 1173,877 1180,882 1189,885 1197,886 1206,876 1214,863']
    ].forEach(([color, points]) => {
        add(svg, 'polyline', { points: points, fill: 'none', stroke: color, 'stroke-width': 1.6 });
    });
}

function drawTimes() {
    const axis = document.getElementById('timeAxis');
    times.forEach(([x, text]) => {
        const el = document.createElement('span');
        el.textContent = text;
        el.style.left = ((x - 25) / 1282 * 100) + '%';
        axis.appendChild(el);
    });
}

function fillLadder() {
    const marks = {
        '2.8678': { 0: ['traded', '1'] },
        '2.8675': { 0: ['traded', '1'], 3: ['traded'], 4: ['ask', '2'] },
        '2.8671': { 2: ['bid', '3'] }
    };
    const covered = p => p <= 28693 && p >= 28687;
    const body = document.getElementById('ladder');
    body.innerHTML = '<tr class="stub">' + '<td></td>'.repeat(6) + '</tr>';
    for (let p = 28696; p >= 28659; p--) {
        const price = (p / 10000).toFixed(4);
        const row = body.insertRow();
        for (let c = 0; c < 6; c++) {
            const cell = row.insertCell();
            const mark = (marks[price] || {})[c];
            if (mark) {
                cell.className = mark[0];
                cell.textContent = mark[1] || '';
            }
            if (c === 3 && p > 28659 && !covered(p)) cell.textContent = price;
        }
    }
}

drawPrice();
drawVolume();
drawAdx();
drawTimes();
fillLadder();
```
